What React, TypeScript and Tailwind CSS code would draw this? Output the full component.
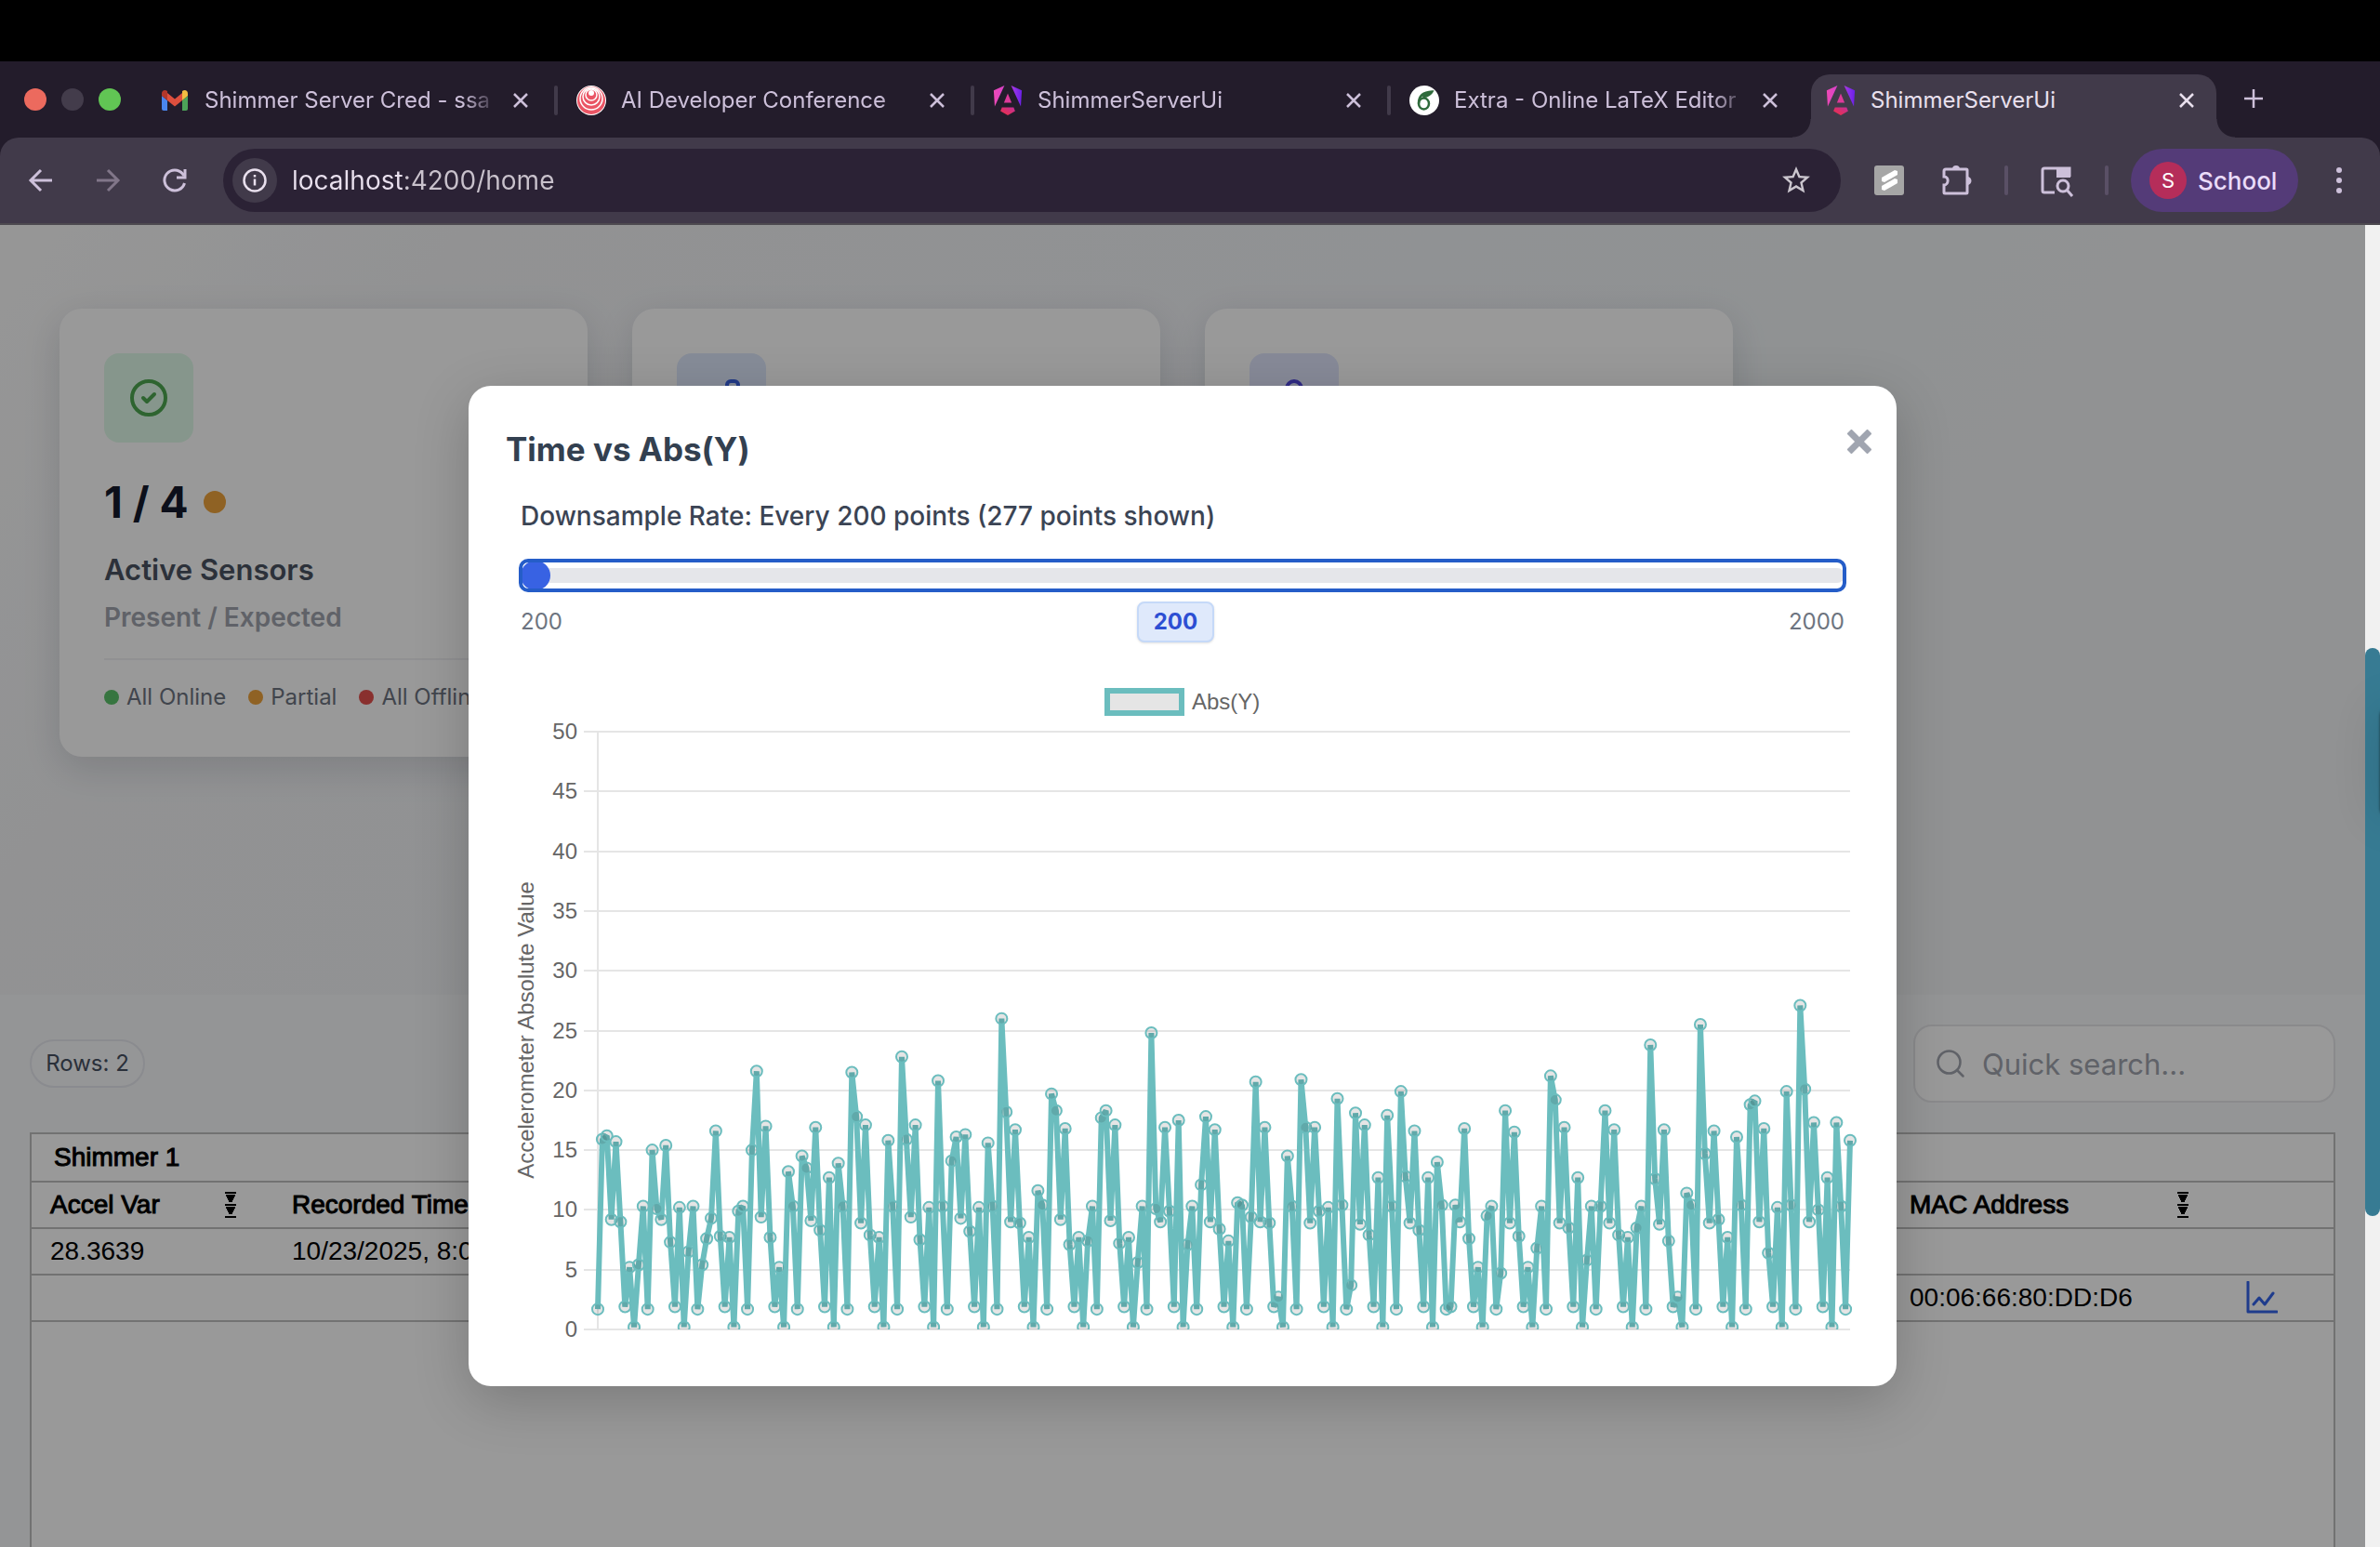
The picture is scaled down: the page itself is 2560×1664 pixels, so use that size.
import React from "react";
import { Search } from "lucide-react";
import { MdStarBorder } from "react-icons/md";

const readings = [
  1.7, 15.9, 16.2, 9.2, 15.7, 9.0, 1.9, 5.2, 0.2, 5.4, 10.3,
  1.7, 15.0, 10.1, 9.2, 15.4, 7.3, 1.9, 10.2, 0.2, 6.5, 10.3,
  1.7, 5.4, 7.6, 9.3, 16.6, 7.8, 1.9, 7.7, 0.2, 9.9, 10.3,
  1.7, 15.0, 21.6, 9.4, 17.0, 7.7, 1.9, 5.2, 0.2, 13.2, 10.3,
  1.7, 14.5, 13.5, 9.1, 16.9, 8.3, 1.9, 12.7, 0.2, 13.9, 10.3,
  1.7, 21.5, 17.8, 8.9, 17.1, 7.9, 1.9, 7.7, 0.2, 15.8, 10.3,
  1.7, 22.8, 15.9, 9.4, 17.1, 7.5, 1.9, 10.2, 0.2, 20.8, 10.3,
  1.7, 14.1, 16.1, 9.3, 16.3, 8.2, 1.9, 10.2, 0.2, 15.6, 10.3,
  1.7, 26.0, 18.2, 9.0, 16.7, 8.9, 1.9, 7.7, 0.2, 11.6, 10.4,
  1.7, 19.7, 18.3, 9.2, 16.8, 7.1, 1.9, 7.7, 0.2, 7.4, 10.3,
  1.7, 17.7, 18.3, 9.1, 17.1, 7.2, 1.9, 7.7, 0.2, 5.6, 10.3,
  1.7, 24.8, 10.1, 9.0, 16.9, 9.9, 1.9, 17.5, 0.2, 7.1, 10.3,
  1.7, 12.1, 17.8, 9.0, 16.7, 8.4, 1.9, 7.4, 0.2, 10.6, 10.4,
  1.7, 9.4, 20.7, 9.0, 16.9, 8.9, 1.9, 2.7, 0.2, 14.5, 10.3,
  1.7, 20.9, 16.9, 8.9, 16.9, 9.9, 1.9, 10.2, 0.2, 19.3, 10.4,
  1.7, 3.7, 18.1, 8.8, 17.1, 7.9, 1.9, 12.7, 0.2, 17.9, 10.3,
  1.7, 19.9, 12.8, 8.9, 16.6, 8.3, 1.9, 12.7, 0.2, 14.0, 10.4,
  1.7, 1.9, 10.4, 9.0, 16.8, 7.6, 1.9, 5.2, 0.2, 9.5, 10.3,
  1.7, 4.7, 18.3, 8.9, 16.5, 7.8, 1.9, 5.2, 0.2, 6.8, 10.3,
  1.7, 21.2, 19.2, 8.9, 16.9, 8.5, 1.9, 12.7, 0.2, 5.8, 10.3,
  1.7, 10.3, 18.3, 8.9, 16.7, 7.9, 1.9, 7.7, 0.2, 8.5, 10.3,
  1.7, 23.8, 12.6, 8.8, 16.7, 7.4, 1.9, 2.7, 0.2, 11.4, 10.4,
  1.7, 25.5, 14.7, 8.9, 16.6, 9.2, 1.9, 7.7, 0.2, 16.1, 10.4,
  1.7, 18.8, 19.1, 9.0, 16.8, 6.4, 1.9, 10.2, 0.2, 19.9, 10.4,
  1.7, 27.1, 20.1, 9.0, 17.3, 10.0, 1.9, 12.7, 0.2, 17.3, 10.3,
  1.7, 15.8,
];

const plot = { left: 99, right: 1446, top: 56, bottom: 699, max: 50 };
const px = (i: number) =>
  plot.left + ((plot.right - plot.left) * i) / (readings.length - 1);
const py = (v: number) =>
  plot.bottom - ((plot.bottom - plot.top) * v) / plot.max;
const ticks = [50, 45, 40, 35, 30, 25, 20, 15, 10, 5, 0];

function Chart() {
  const points = readings.map((v, i) => `${px(i)},${py(v)}`).join(" ");
  return (
    <svg
      viewBox="0 0 1456 720"
      className="mt-10 block h-auto w-full overflow-visible font-['Liberation_Sans',Arial,sans-serif]"
      role="img"
      aria-label="Abs(Y) over time"
    >
      <rect x="647" y="12" width="80" height="24" fill="#e5e5e5" stroke="#6bbdbe" strokeWidth="6" />
      <text x="738" y="32" fontSize="24" fill="#666">Abs(Y)</text>
      <text x="30" y="377" fontSize="24" fill="#666" textAnchor="middle" transform="rotate(-90 30 377)">
        Accelerometer Absolute Value
      </text>
      {ticks.map((t) => (
        <g key={t}>
          <line x1="84" x2="1446" y1={Math.round(py(t))} y2={Math.round(py(t))} stroke="#e5e5e5" strokeWidth="2" />
          <text x="77" y={py(t) + 8} fontSize="24" fill="#666" textAnchor="end">{t}</text>
        </g>
      ))}
      <line x1="99" x2="99" y1={plot.top} y2={plot.bottom} stroke="#e5e5e5" strokeWidth="2" />
      <clipPath id="plot-area">
        <rect x="80" y="0" width="1380" height={plot.bottom} />
      </clipPath>
      <g clipPath="url(#plot-area)">
        <polyline points={points} fill="none" stroke="#6bbdbe" strokeWidth="6" strokeLinejoin="bevel" />
        {readings.map((v, i) => (
          <circle key={i} cx={px(i)} cy={py(v)} r="6" fill="#000" fillOpacity="0.1" stroke="#6bbdbe" strokeWidth="2" />
        ))}
      </g>
    </svg>
  );
}

function AngularLogo({ id }: { id: string }) {
  return (
    <svg viewBox="0 0 24 24" className="size-8 shrink-0" aria-hidden="true">
      <defs>
        <linearGradient id={id} x1="0" y1="0.3" x2="1" y2="0.3">
          <stop offset="0" stopColor="#ee4ab4" />
          <stop offset="0.45" stopColor="#d23fd0" />
          <stop offset="0.8" stopColor="#8a2fea" />
          <stop offset="1" stopColor="#6a1fe6" />
        </linearGradient>
        <linearGradient id={id + "-base"} x1="0" y1="1" x2="1" y2="0">
          <stop offset="0" stopColor="#f03040" />
          <stop offset="1" stopColor="#c22f9a" />
        </linearGradient>
      </defs>
      <path fill={`url(#${id})`} d="M14.692 0l7.832 16.855.814-12.856L14.692 0ZM9.308 0 .662 3.999l.814 12.856L9.308 0Z" />
      <path fill="#dd3a9a" d="M8.903 13.93h6.198L12 6.396 8.903 13.93Z" />
      <path fill={`url(#${id}-base)`} d="M16.712 17.711H7.288l-1.204 2.916L12 24l5.916-3.373-1.204-2.916Z" />
    </svg>
  );
}

function GmailLogo() {
  return (
    <svg viewBox="0 0 32 32" className="size-8 shrink-0" aria-hidden="true">
      <path fill="#4a86ee" d="M2 11l6 5v11H4a2 2 0 0 1-2-2z" />
      <path fill="#4ca358" d="M30 11l-6 5v11h4a2 2 0 0 0 2-2z" />
      <path fill="#dd4f3e" d="M8 8l8 6.500 8-6.500v8l-8 6.500-8-6.500z" />
      <path fill="#b3372b" d="M2 8.500C2 5 5.500 4 8 6v10l-6-5z" />
      <path fill="#f2bd42" d="M30 8.500C30 5 26.500 4 24 6v10l6-5z" />
    </svg>
  );
}

function ConferenceLogo() {
  return (
    <svg viewBox="0 0 32 32" className="size-8 shrink-0" aria-hidden="true">
      <circle cx="16" cy="16" r="16" fill="#fff" />
      <circle cx="16" cy="16" r="15" fill="#ea5565" />
      <g fill="none" stroke="#fff">
        <circle cx="16" cy="14" r="12" strokeWidth="1.500" />
        <circle cx="16" cy="12" r="9" strokeWidth="1.500" />
        <circle cx="16" cy="10" r="6" strokeWidth="1.500" />
      </g>
      <circle cx="16" cy="8" r="3" fill="#fff" />
    </svg>
  );
}

function OverleafLogo() {
  return (
    <svg viewBox="0 0 32 32" className="size-8 shrink-0" aria-hidden="true">
      <circle cx="16" cy="16" r="16" fill="#fff" />
      <g fill="none" stroke="#2f6b3c" strokeWidth="2.500" strokeLinecap="round">
        <ellipse cx="15.500" cy="19.500" rx="5.500" ry="6" />
        <path d="M10 19c0-7 4-12 14.500-12.500-2 4-5.500 5-9 5.500" />
      </g>
      <path fill="#2f6b3c" d="M13 11c3-3.500 7-5 12-4.800-2.500 4-6 5-10 5.600z" />
    </svg>
  );
}

type TabProps = {
  title: string;
  icon: React.ReactNode;
  separator?: boolean;
};

function Tab({ title, icon, separator }: TabProps) {
  return (
    <div className="relative flex h-full w-[448px] min-w-0 items-center pr-6 pb-3 pl-5 text-[#cdc0da]">
      {icon}
      <span className="ml-4 flex-1 overflow-hidden text-[24px] whitespace-nowrap [mask-image:linear-gradient(90deg,#000_88%,transparent)]">
        {title}
      </span>
      <CloseTab title={title} />
      {separator && <span className="absolute right-0 bottom-6 h-8 w-1 rounded-sm bg-[#413a4a]" />}
    </div>
  );
}

function CloseTab({ title }: { title: string }) {
  return (
    <button type="button" aria-label={`Close ${title}`} className="ml-2 flex size-8 items-center justify-center">
      <svg viewBox="0 0 16 16" className="size-4" fill="none" stroke="currentColor" strokeWidth="2.500">
        <path d="M1 1l14 14M15 1L1 15" />
      </svg>
    </button>
  );
}

function BrowserChrome() {
  return (
    <header className="shrink-0 bg-[#231c2b] font-[Inter,sans-serif]">
      <div className="h-[66px] bg-black" />
      <div className="flex h-[82px] items-end">
        <div className="flex h-full w-[152px] shrink-0 items-center gap-4 pl-[26px]">
          <span className="size-6 rounded-full bg-[#ec6a5e]" />
          <span className="size-6 rounded-full bg-[#433c4b]" />
          <span className="size-6 rounded-full bg-[#61c554]" />
        </div>
        <div className="flex h-[68px] min-w-0">
          <Tab title="Shimmer Server Cred - ssa" icon={<GmailLogo />} separator />
          <Tab title="AI Developer Conference" icon={<ConferenceLogo />} separator />
          <Tab title="ShimmerServerUi" icon={<AngularLogo id="ng-a" />} separator />
          <Tab title="Extra - Online LaTeX Editor" icon={<OverleafLogo />} />
          <div className="relative mr-2 ml-1 flex h-full w-[436px] items-center rounded-t-[20px] bg-[#413a4a] px-4 pb-3 text-[#e9e0ee]">
            <span className="absolute bottom-0 -left-5 size-5 bg-[radial-gradient(circle_at_0_0,#231c2b_19px,#413a4a_20px)]" />
            <span className="absolute -right-5 bottom-0 size-5 bg-[radial-gradient(circle_at_100%_0,#231c2b_19px,#413a4a_20px)]" />
            <AngularLogo id="ng-b" />
            <span className="ml-4 flex-1 text-[24px] whitespace-nowrap">ShimmerServerUi</span>
            <CloseTab title="ShimmerServerUi" />
          </div>
        </div>
        <button type="button" aria-label="New tab" className="mb-4 ml-3 flex h-[52px] w-10 items-center justify-center text-[#cdc0da]">
          <svg viewBox="0 0 20 20" className="size-5" fill="none" stroke="currentColor" strokeWidth="2.500">
            <path d="M10 0v20M0 10h20" />
          </svg>
        </button>
      </div>
      <div className="flex h-[94px] items-center rounded-t-[20px] border-b-2 border-[#4d4a50] bg-[#413a4a] text-[#cdc0da]">
        <nav className="flex w-[240px] shrink-0 items-center gap-10 pl-7">
          <button type="button" aria-label="Back" className="size-8">
            <svg viewBox="0 0 32 32" className="size-8" fill="none" stroke="currentColor" strokeWidth="3">
              <path d="M28 16H6M16 5L5 16l11 11" />
            </svg>
          </button>
          <button type="button" aria-label="Forward" className="size-8 text-[#817689]">
            <svg viewBox="0 0 32 32" className="size-8" fill="none" stroke="currentColor" strokeWidth="3">
              <path d="M4 16h22M16 5l11 11-11 11" />
            </svg>
          </button>
          <button type="button" aria-label="Reload" className="size-8">
            <svg viewBox="0 0 32 32" className="size-8" fill="none" stroke="currentColor" strokeWidth="3">
              <path d="M26.500 19A11 11 0 1 1 24.500 9L26 11" />
              <path d="M27 4v9h-9" />
            </svg>
          </button>
        </nav>
        <div className="flex h-[68px] flex-1 items-center rounded-full bg-[#2b2235] pr-[30px] pl-[10px]">
          <button type="button" aria-label="Site information" className="flex size-12 shrink-0 items-center justify-center rounded-full bg-[#413a4a] text-[#e9e0ee]">
            <svg viewBox="0 0 26 26" className="size-[26px]" fill="none" stroke="currentColor" strokeWidth="2.500">
              <circle cx="13" cy="13" r="11.500" />
              <path d="M13 11.500v7M13 7v2.500" />
            </svg>
          </button>
          <input
            aria-label="Address"
            defaultValue="localhost:4200/home"
            className="ml-4 h-12 min-w-0 flex-1 bg-[linear-gradient(90deg,#e9e0ee_120px,#c9c2cc_120px)] bg-clip-text text-[28px] text-transparent outline-none"
          />
          <button type="button" aria-label="Bookmark this page" className="text-[#cbc6ce]">
            <MdStarBorder className="size-9" />
          </button>
        </div>
        <div className="flex shrink-0 items-center pl-9">
          <button type="button" aria-label="Stride extension" className="size-8">
            <svg viewBox="0 0 32 32" className="size-8" aria-hidden="true">
              <rect width="32" height="32" rx="3" fill="#a6a6a6" />
              <path fill="#fff" d="M8 13l14-8 3 1v4L11 18l-3-1zM8 22l14-8 3 1v4L11 27l-3-1z" />
            </svg>
          </button>
          <button type="button" aria-label="Extensions" className="ml-[38px] size-9">
            <svg viewBox="0 0 36 36" className="size-9" fill="none" stroke="currentColor" strokeWidth="3">
              <path d="M5 8a2 2 0 0 1 2-2h22a1 1 0 0 1 1 1v24a1 1 0 0 1-1 1H6a1 1 0 0 1-1-1v-8c5 0 6-9 0-9z" />
              <path fill="currentColor" stroke="none" d="M14 6a4 4 0 0 1 8 0zM30 14a4 4 0 0 1 0 9z" />
            </svg>
          </button>
          <span className="ml-[34px] h-8 w-1 rounded-sm bg-[#5a5066]" />
          <button type="button" aria-label="Search tabs" className="ml-8 size-10">
            <svg viewBox="0 0 40 40" className="size-10" fill="none" stroke="currentColor" strokeWidth="3">
              <path d="M18 33H7a2 2 0 0 1-2-2V9a2 2 0 0 1 2-2h27v9" />
              <path fill="currentColor" stroke="none" d="M20 6h15v11H20z" />
              <circle cx="27" cy="26" r="6" />
              <path d="M31 30l6 7" />
            </svg>
          </button>
          <span className="ml-8 h-8 w-1 rounded-sm bg-[#5a5066]" />
          <button type="button" className="ml-6 flex h-[68px] w-[180px] items-center gap-3 rounded-full bg-[#543b78] pl-5 text-[#eadcf8]">
            <span className="flex size-10 items-center justify-center rounded-full bg-[#b52d5a] text-[22px] text-white">S</span>
            <span className="text-[26px] font-medium">School</span>
          </button>
          <button type="button" aria-label="Browser menu" className="mr-6 ml-6 size-10">
            <svg viewBox="0 0 40 40" className="size-10" fill="currentColor">
              <circle cx="20" cy="9" r="3" />
              <circle cx="20" cy="20" r="3" />
              <circle cx="20" cy="31" r="3" />
            </svg>
          </button>
        </div>
      </div>
    </header>
  );
}

const cardClass = "h-[482px] rounded-3xl bg-white p-12 shadow-[0_12px_40px_rgba(15,23,42,0.14)]";

function Cards() {
  return (
    <section className="h-[828px] bg-[linear-gradient(125deg,#fbfbfb_0%,#f3f4f6_16%,#f1f3f7_50%,#f0f4f6_64%,#f2f3f6_74%,#f2f3f6_100%)] px-16 pt-[90px]">
      <div className="grid grid-cols-4 gap-12">
        <article className={cardClass}>
          <div className="flex size-24 items-center justify-center rounded-2xl bg-[#e0fbe9] text-[#4da750]">
            <HeroIcon d="M9 12l2 2 4-4m6 2a9 9 0 11-18 0 9 9 0 0118 0z" />
          </div>
          <div className="mt-8 flex h-16 items-center gap-4">
            <span className="text-[46px] font-bold text-[#141a2c]">1 / 4</span>
            <span className="size-6 rounded-full bg-[#eea33c]" />
          </div>
          <h3 className="mt-5 text-[31px] leading-[42px] font-semibold text-[#4a5362]">Active Sensors</h3>
          <p className="mt-[14px] text-[28px] leading-8 font-semibold text-[#a0a4ad]">Present / Expected</p>
          <div className="mt-7 border-t-2 border-[#f0f1f3] pt-6">
            <ul className="flex gap-6 text-[24px] leading-8 whitespace-nowrap text-[#6d7480]">
              <li className="flex items-center gap-2"><span className="size-4 rounded-full bg-[#5dc36b]" />All Online</li>
              <li className="flex items-center gap-2"><span className="size-4 rounded-full bg-[#eea33c]" />Partial</li>
              <li className="flex items-center gap-2"><span className="size-4 rounded-full bg-[#e4504e]" />All Offline</li>
            </ul>
          </div>
        </article>
        <article className={cardClass}>
          <div className="flex size-24 items-center justify-center rounded-2xl bg-[#dfe9fd] text-[#3a62e0]">
            <HeroIcon d="M9 19v-6a2 2 0 00-2-2H5a2 2 0 00-2 2v6a2 2 0 002 2h2a2 2 0 002-2zm0 0V9a2 2 0 012-2h2a2 2 0 012 2v10m-6 0a2 2 0 002 2h2a2 2 0 002-2m0 0V5a2 2 0 012-2h2a2 2 0 012 2v14a2 2 0 01-2 2h-2a2 2 0 01-2-2z" />
          </div>
        </article>
        <article className={cardClass}>
          <div className="flex size-24 items-center justify-center rounded-2xl bg-[#e1e7fe] text-[#5046dc]">
            <HeroIcon d="M16 7a4 4 0 11-8 0 4 4 0 018 0zM12 14a7 7 0 00-7 7h14a7 7 0 00-7-7z" />
          </div>
        </article>
      </div>
    </section>
  );
}

function HeroIcon({ d }: { d: string }) {
  return (
    <svg viewBox="0 0 24 24" className="size-12" fill="none" stroke="currentColor" strokeWidth="2" strokeLinecap="round" strokeLinejoin="round" aria-hidden="true">
      <path d={d} />
    </svg>
  );
}

function SortButton({ column }: { column: string }) {
  return (
    <button type="button" aria-label={`Sort by ${column}`} className="h-7 w-3">
      <svg viewBox="0 0 12 28" className="h-7 w-3" stroke="#000" strokeWidth="2">
        <path d="M0 1h12M1 4h10M2 6h8M3 8h6M4 10h4M0 14h12M1 17h10M2 19h8M3 21h6M4 23h4M0 27h12" />
      </svg>
    </button>
  );
}

const line = "border-b-2 border-[#bfbfbf]";

function SensorTable() {
  return (
    <section className="flex flex-1 flex-col bg-[#f7f8fa] px-8 pt-8">
      <div className="flex h-[84px] items-center justify-between">
        <span className="flex h-[52px] w-[124px] items-center justify-center rounded-full border-2 border-[#e6e8ee] bg-[#f9fafc] text-[24px] text-[#475062]">
          Rows: 2
        </span>
        <label className="flex h-[84px] w-[454px] items-center rounded-[20px] border-2 border-[#e6e7ea] bg-white pl-5">
          <Search className="size-9 text-[#a0a4ad]" strokeWidth={1.7} />
          <span className="sr-only">Quick search</span>
          <input
            type="search"
            placeholder="Quick search..."
            className="ml-4 h-14 min-w-0 flex-1 text-[31px] outline-none placeholder:text-[#a0a4ad]"
          />
        </label>
      </div>
      <div className="mt-8 flex-1 border-2 border-b-0 border-[#bfbfbf] bg-white font-['Liberation_Sans',Arial,sans-serif] text-[28px] text-black">
        <table className="w-full table-fixed border-separate border-spacing-0 text-left whitespace-nowrap">
          <colgroup>
            <col className="w-[260px]" />
            <col />
            <col className="w-[360px]" />
            <col className="w-[116px]" />
          </colgroup>
          <thead>
            <tr className="h-[52px]">
              <th colSpan={4} className={`${line} pl-6 font-normal [-webkit-text-stroke:1px]`}>Shimmer 1</th>
            </tr>
            <tr className="h-[50px]">
              <th className={`${line} px-5 font-normal`}>
                <span className="flex items-center justify-between pr-5">
                  <span className="[-webkit-text-stroke:1px]">Accel Var</span>
                  <SortButton column="Accel Var" />
                </span>
              </th>
              <th className={`${line} px-5 font-normal [-webkit-text-stroke:1px]`}>Recorded Time</th>
              <th className={`${line} px-5 font-normal`}>
                <span className="flex items-center justify-between pr-5">
                  <span className="[-webkit-text-stroke:1px]">MAC Address</span>
                  <SortButton column="MAC Address" />
                </span>
              </th>
              <th className={line} aria-label="Actions" />
            </tr>
          </thead>
          <tbody>
            <tr className="h-[50px]">
              <td className={`${line} px-5`}>28.3639</td>
              <td className={`${line} px-5`}>10/23/2025, 8:00 PM</td>
              <td className={line} />
              <td className={line} />
            </tr>
            <tr className="h-[50px]">
              <td className={line} />
              <td className={line} />
              <td className={`${line} px-5`}>00:06:66:80:DD:D6</td>
              <td className={`${line} pl-5`}>
                <button type="button" aria-label="Show chart" className="block size-9">
                  <svg viewBox="0 0 36 36" className="size-9" fill="none" stroke="#3464ea" strokeWidth="3" strokeLinecap="round" strokeLinejoin="round">
                    <path d="M4 1v32h31M10 25l6-7 6 7 9-12" />
                  </svg>
                </button>
              </td>
            </tr>
          </tbody>
        </table>
      </div>
    </section>
  );
}

function ChartDialog() {
  const [rate, setRate] = React.useState(200);
  return (
    <div className="absolute inset-0 flex items-center justify-center bg-black/40">
      <div
        role="dialog"
        aria-labelledby="chart-title"
        className="relative w-[1536px] max-w-full rounded-3xl bg-white p-10 shadow-[0_16px_60px_rgba(0,0,0,0.2)]"
      >
        <button type="button" aria-label="Close dialog" className="absolute top-11 right-6 flex size-8 items-center justify-center">
          <svg viewBox="0 0 26 26" className="size-[26px]" fill="none" stroke="#a0a5b0" strokeWidth="7">
            <path d="M2 2l22 22M24 2L2 24" />
          </svg>
        </button>
        <h2 id="chart-title" className="text-[35px] leading-[56px] font-bold text-[#334050]">Time vs Abs(Y)</h2>
        <div className="px-4">
          <label htmlFor="rate" className="mt-6 block text-[28px] leading-10 font-medium text-[#3b4454]">
            Downsample Rate: Every {rate} points (277 points shown)
          </label>
          <input
            id="rate"
            type="range"
            min={200}
            max={2000}
            step={100}
            value={rate}
            onChange={(e) => setRate(Number(e.target.value))}
            className="mt-7 block h-8 w-full appearance-none rounded-lg bg-transparent outline-4 -outline-offset-2 outline-[#255dc8] [&::-webkit-slider-runnable-track]:h-4 [&::-webkit-slider-runnable-track]:rounded-lg [&::-webkit-slider-runnable-track]:bg-[#e5e6ea] [&::-webkit-slider-thumb]:-mt-2 [&::-webkit-slider-thumb]:size-8 [&::-webkit-slider-thumb]:appearance-none [&::-webkit-slider-thumb]:rounded-full [&::-webkit-slider-thumb]:bg-[#3862e3]"
          />
          <div className="mt-3 flex items-center justify-between text-[24px] text-[#6d7480]">
            <span>200</span>
            <output htmlFor="rate" className="flex h-11 items-center rounded-lg border-2 border-[#c5d9f8] bg-[#dfe9fb] px-4 font-bold text-[#2d4fd3] shadow-sm">
              {rate}
            </output>
            <span>2000</span>
          </div>
        </div>
        <Chart />
      </div>
    </div>
  );
}

export default function App() {
  return (
    <div className="flex min-h-screen flex-col overflow-hidden font-[Inter,sans-serif]">
      <BrowserChrome />
      <div className="relative flex flex-1">
        <main className="relative flex min-w-0 flex-1 flex-col overflow-hidden">
          <Cards />
          <SensorTable />
          <ChartDialog />
        </main>
        <div className="w-4 shrink-0 bg-[#f1f1f1] pt-[455px]">
          <div className="h-[611px] rounded-full bg-[#377b93]" />
        </div>
        <div className="absolute top-[520px] -right-8 h-[116px] w-8 rounded-lg shadow-[0_0_50px_rgba(0,0,0,0.15),0_0_3px_rgba(0,0,0,0.6)]" />
      </div>
    </div>
  );
}
